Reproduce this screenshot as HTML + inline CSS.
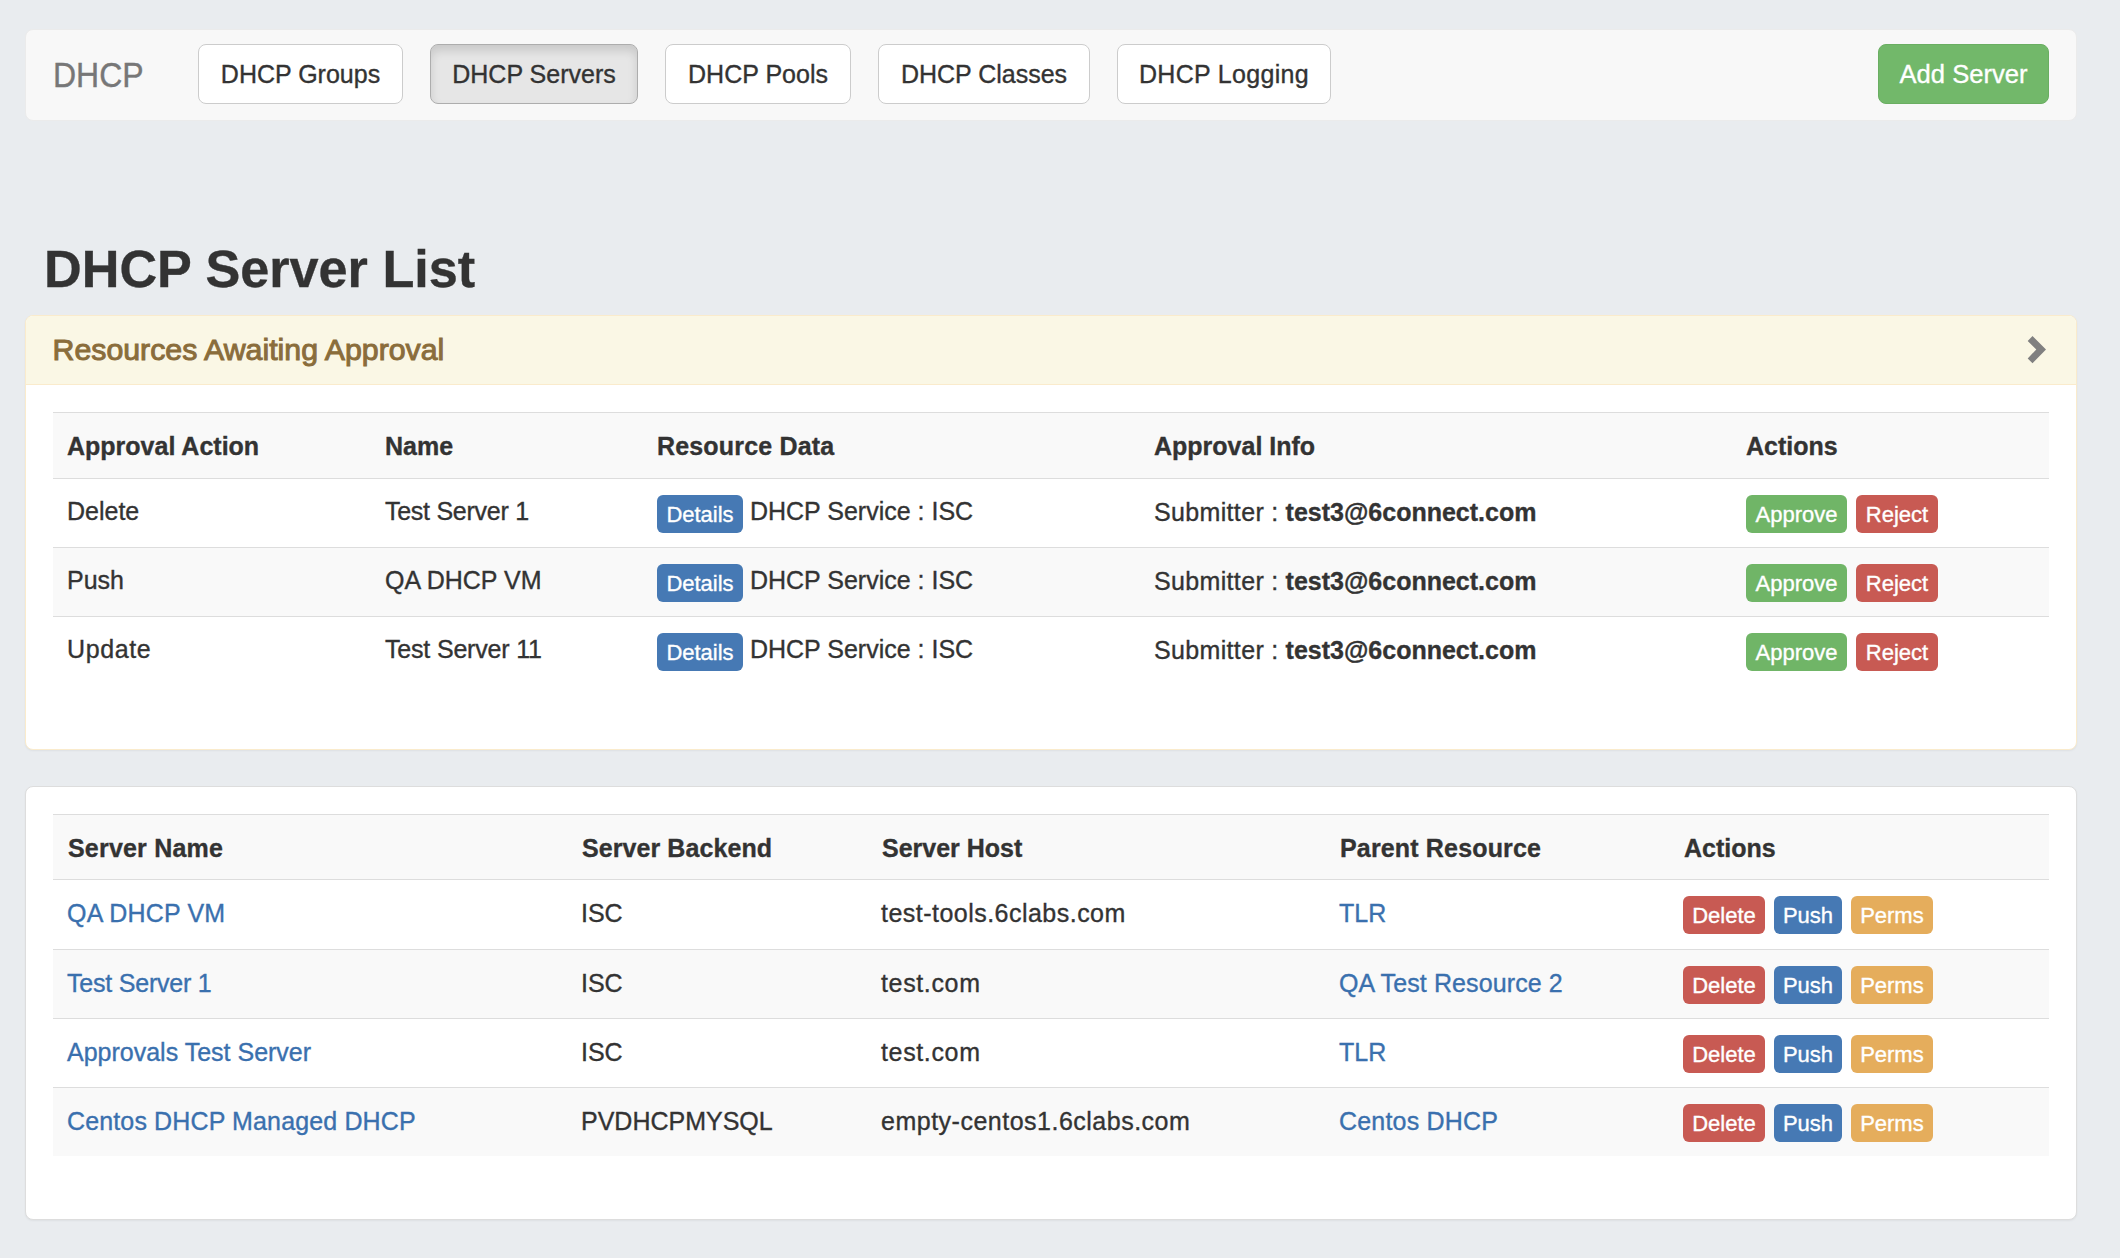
<!DOCTYPE html>
<html>
<head>
<meta charset="utf-8">
<style>
* { box-sizing: border-box; }
html, body { margin: 0; padding: 0; }
body {
  width: 2120px; height: 1258px; overflow: hidden; position: relative;
  background: #e9ecef;
  font-family: "Liberation Sans", sans-serif;
  color: #333;
  -webkit-text-stroke: 0.35px currentColor;
}
.abs { position: absolute; }
.navbar {
  left: 25px; top: 29px; width: 2052px; height: 92px;
  background: #f8f8f8; border: 1px solid #ebebeb; border-radius: 8px;
}
.brand { left: 53px; top: 54px; font-size: 32px; transform: scaleY(1.07); transform-origin: 0 33px; line-height: 44px; color: #777; white-space: nowrap; }
.nbtn {
  top: 44px; height: 60px; border: 1px solid #ccc; border-radius: 8px; background: #fff;
  font-size: 25px; line-height: 58px; text-align: center; color: #333; white-space: nowrap;
}
.nbtn.active { background: #e6e6e6; border-color: #adadad; box-shadow: inset 0 6px 10px rgba(0,0,0,.125); }
.nbtn.green { background: #72b86a; border-color: #6aae62; color: #fff; font-size: 25.6px; }
h1.title { position: absolute; margin: 0; left: 44px; top: 234px; font-size: 52.2px; line-height: 70px; font-weight: bold; color: #333; white-space: nowrap; }
.panel { left: 25px; width: 2052px; background: #fff; border: 1px solid #ddd; border-radius: 8px; box-shadow: 0 1px 2px rgba(0,0,0,.05); }
.panel.warn { border-color: #faebcc; }
.ph { position: absolute; left: 0; top: 0; right: 0; height: 69px; background: #faf7e5; border-bottom: 1px solid #faebcc; border-radius: 7px 7px 0 0; }
.ph .t { position: absolute; left: 26.5px; top: 14px; font-size: 30.3px; line-height: 40px; color: #8a6d3b; white-space: nowrap; -webkit-text-stroke: 1.0px currentColor; }
.chev { position: absolute; left: 0; top: 0; }
.tbl { position: absolute; left: 27px; width: 1996px; border-top: 1px solid #ddd; }
.row { position: relative; height: 69px; border-bottom: 1px solid #ddd; display: flex; }
.row.last { border-bottom: none; }
.row.hd { height: 66px; background: #f9f9f9; font-weight: bold; }
.row.odd { background: #f9f9f9; }
.cell { position: relative; padding-left: 14px; font-size: 25px; white-space: nowrap; }
.row .cell { line-height: 64px; }
.row.hd .cell { line-height: 66px; }
.low .row.hd { height: 65px; }
.low .row .cell { line-height: 66px; }
.low .row.hd .cell { line-height: 66px; padding-left: 15px; }
.low .row.r1 { height: 70px; }
.low .row.r1 .cell { line-height: 67px; }
.low .row.last { height: 68px; }
.sbtn { display: inline-block; height: 38px; line-height: 38px; padding: 1px 0 0 0; text-align: center; border-radius: 6px; color: #fff; font-size: 22px; vertical-align: top; margin-top: 16px; margin-right: 2px; font-weight: normal; }
.bp { background: #4679b4; }
.bs { background: #70b567; }
.bd { background: #c85a53; }
.bw { background: #e5ad5c; }
a { color: #3a70ae; text-decoration: none; }
</style>
</head>
<body>
<div class="abs navbar"></div>
<div class="abs brand">DHCP</div>
<div class="abs nbtn" style="left:198px;width:205px;">DHCP Groups</div>
<div class="abs nbtn active" style="left:430px;width:208px;">DHCP Servers</div>
<div class="abs nbtn" style="left:665px;width:186px;">DHCP Pools</div>
<div class="abs nbtn" style="left:878px;width:212px;">DHCP Classes</div>
<div class="abs nbtn" style="left:1117px;width:214px;letter-spacing:0.32px">DHCP Logging</div>
<div class="abs nbtn green" style="left:1878px;width:171px;">Add Server</div>

<h1 class="title">DHCP Server List</h1>

<div class="abs panel warn" style="top:315px;height:435px;">
<div class="ph"><div class="t">Resources Awaiting Approval</div></div>
<div class="tbl" style="top:96px">
<div class="row hd"><div class="cell" style="width:318px">Approval Action</div><div class="cell" style="width:272px">Name</div><div class="cell" style="width:497px"><span style="letter-spacing:0.170px">Resource Data</span></div><div class="cell" style="width:592px">Approval Info</div><div class="cell" style="width:317px">Actions</div></div>
<div class="row"><div class="cell" style="width:318px">Delete</div><div class="cell" style="width:272px"><span style="letter-spacing:-0.270px">Test Server 1</span></div><div class="cell" style="width:497px"><span class="sbtn bp" style="margin-right:0;width:86px">Details</span> DHCP Service : ISC</div><div class="cell" style="width:592px"><span style="position:relative;top:1px"><span style="letter-spacing:0.340px">Submitter :</span> <b>test3@6connect.com</b></span></div><div class="cell" style="width:317px"><span class="sbtn bs" style="width:101px">Approve</span> <span class="sbtn bd" style="width:82px">Reject</span></div></div>
<div class="row odd"><div class="cell" style="width:318px">Push</div><div class="cell" style="width:272px">QA DHCP VM</div><div class="cell" style="width:497px"><span class="sbtn bp" style="margin-right:0;width:86px">Details</span> DHCP Service : ISC</div><div class="cell" style="width:592px"><span style="position:relative;top:1px"><span style="letter-spacing:0.340px">Submitter :</span> <b>test3@6connect.com</b></span></div><div class="cell" style="width:317px"><span class="sbtn bs" style="width:101px">Approve</span> <span class="sbtn bd" style="width:82px">Reject</span></div></div>
<div class="row last"><div class="cell" style="width:318px"><span style="letter-spacing:0.600px">Update</span></div><div class="cell" style="width:272px"><span style="letter-spacing:-0.180px">Test Server 11</span></div><div class="cell" style="width:497px"><span class="sbtn bp" style="margin-right:0;width:86px">Details</span> DHCP Service : ISC</div><div class="cell" style="width:592px"><span style="position:relative;top:1px"><span style="letter-spacing:0.340px">Submitter :</span> <b>test3@6connect.com</b></span></div><div class="cell" style="width:317px"><span class="sbtn bs" style="width:101px">Approve</span> <span class="sbtn bd" style="width:82px">Reject</span></div></div>
</div>
</div>

<div class="abs panel" style="top:786px;height:434px;">
<div class="tbl low" style="top:27px">
<div class="row hd"><div class="cell" style="width:514px"><span style="letter-spacing:0.200px">Server Name</span></div><div class="cell" style="width:300px"><span style="letter-spacing:0.080px">Server Backend</span></div><div class="cell" style="width:458px">Server Host</div><div class="cell" style="width:344px"><span style="letter-spacing:0.160px">Parent Resource</span></div><div class="cell" style="width:380px">Actions</div></div>
<div class="row r1"><div class="cell" style="width:514px"><a><span style="letter-spacing:0.180px">QA DHCP VM</span></a></div><div class="cell" style="width:300px">ISC</div><div class="cell" style="width:458px"><span style="letter-spacing:0.475px">test-tools.6clabs.com</span></div><div class="cell" style="width:344px"><a>TLR</a></div><div class="cell" style="width:380px"><span class="sbtn bd" style="width:82px">Delete</span> <span class="sbtn bp" style="width:68px">Push</span> <span class="sbtn bw" style="width:82px">Perms</span></div></div>
<div class="row odd"><div class="cell" style="width:514px"><a><span style="letter-spacing:-0.210px">Test Server 1</span></a></div><div class="cell" style="width:300px">ISC</div><div class="cell" style="width:458px"><span style="letter-spacing:0.640px">test.com</span></div><div class="cell" style="width:344px"><a><span style="letter-spacing:0.110px">QA Test Resource 2</span></a></div><div class="cell" style="width:380px"><span class="sbtn bd" style="width:82px">Delete</span> <span class="sbtn bp" style="width:68px">Push</span> <span class="sbtn bw" style="width:82px">Perms</span></div></div>
<div class="row"><div class="cell" style="width:514px"><a>Approvals Test Server</a></div><div class="cell" style="width:300px">ISC</div><div class="cell" style="width:458px"><span style="letter-spacing:0.640px">test.com</span></div><div class="cell" style="width:344px"><a>TLR</a></div><div class="cell" style="width:380px"><span class="sbtn bd" style="width:82px">Delete</span> <span class="sbtn bp" style="width:68px">Push</span> <span class="sbtn bw" style="width:82px">Perms</span></div></div>
<div class="row odd last"><div class="cell" style="width:514px"><a><span style="letter-spacing:0.135px">Centos DHCP Managed DHCP</span></a></div><div class="cell" style="width:300px">PVDHCPMYSQL</div><div class="cell" style="width:458px"><span style="letter-spacing:0.500px">empty-centos1.6clabs.com</span></div><div class="cell" style="width:344px"><a><span style="letter-spacing:0.200px">Centos DHCP</span></a></div><div class="cell" style="width:380px"><span class="sbtn bd" style="width:82px">Delete</span> <span class="sbtn bp" style="width:68px">Push</span> <span class="sbtn bw" style="width:82px">Perms</span></div></div>
</div>
</div>
<svg style="position:absolute;left:0;top:0" width="2120" height="1258"><polygon points="2032.5,335.9 2046,349.4 2032.5,363.2 2027.7,358.4 2036.3,349.4 2027.7,340.9" fill="#808080"/></svg>
</body>
</html>
